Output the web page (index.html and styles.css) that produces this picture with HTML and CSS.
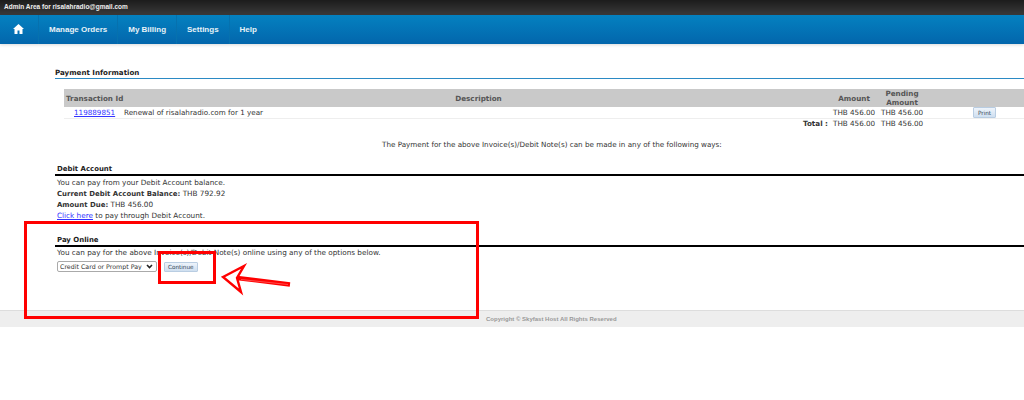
FILE: index.html
```html
<!DOCTYPE html>
<html lang="en">
<head>
<meta charset="utf-8">
<title>Payment Information</title>
<link rel="stylesheet" href="styles.css">
</head>
<body>
<div class="topbar">Admin Area for risalahradio@gmail.com</div>
<nav class="nav">
  <a class="nav-item home"><svg width="11" height="10" viewBox="0 0 11 10"><path d="M5.5 0 L11 5 H9.5 V10 H6.5 V6.5 H4.5 V10 H1.5 V5 H0 Z" fill="#fff"/></svg></a>
  <a class="nav-item">Manage Orders</a>
  <a class="nav-item">My Billing</a>
  <a class="nav-item">Settings</a>
  <a class="nav-item">Help</a>
</nav>
<main class="content">
  <h2 class="info-title">Payment Information</h2>
  <div class="grid">
    <div class="hd first">Transaction Id</div>
    <div class="hd center">Description</div>
    <div class="hd center">Amount</div>
    <div class="hd center">Pending Amount</div>
    <div class="hd"></div>
    <div class="cell id"><a href="#">119889851</a></div>
    <div class="cell">Renewal of risalahradio.com for 1 year</div>
    <div class="cell right">THB 456.00</div>
    <div class="cell pend">THB 456.00</div>
    <div class="cell print"><button class="btn">Print</button></div>
    <div class="tot-label">Total :</div>
    <div class="tot right">THB 456.00</div>
    <div class="tot pend">THB 456.00</div>
    <div class="tot"></div>
  </div>
  <p class="ways">The Payment for the above Invoice(s)/Debit Note(s) can be made in any of the following ways:</p>
  <section class="debit">
    <h3 class="sec-title">Debit Account</h3>
    <p class="line">You can pay from your Debit Account balance.</p>
    <p class="line"><b>Current Debit Account Balance:</b> THB 792.92</p>
    <p class="line"><b>Amount Due:</b> THB 456.00</p>
    <p class="line"><a href="#">Click here</a> to pay through Debit Account.</p>
  </section>
  <section class="online">
    <h3 class="sec-title">Pay Online</h3>
    <p class="line">You can pay for the above Invoice(s)/Debit Note(s) online using any of the options below.</p>
    <div class="pay-row">
      <select class="pay-select"><option>Credit Card or Prompt Pay</option></select>
      <button class="btn">Continue</button>
    </div>
  </section>
</main>
<footer class="footer">Copyright © Skyfast Host All Rights Reserved</footer>
<div class="mark mark-big"></div>
<div class="mark mark-small"></div>
<svg class="arrow" width="74" height="34" viewBox="0 0 74 34">
  <path d="M17 16 L70 22.5" stroke="#f00" stroke-width="4.4" fill="none"/>
  <path d="M3 15 L24 4 L17 16 L21 30 Z" fill="#fff" stroke="#f00" stroke-width="2.4" stroke-linejoin="miter"/>
  <path d="M21 17.5 L68 22.5" stroke="#ff6a6a" stroke-width="0.7" fill="none"/>
</svg>
</body>
</html>
```
FILE: styles.css
```css
html, body { margin: 0; padding: 0; background: #fff; }
body { position: relative; width: 1024px; height: 400px; overflow: hidden; font-family: "DejaVu Sans", Verdana, sans-serif; font-size: 7.2px; color: #333; }
a { color: #33f; text-decoration: underline; }
b { font-size: 6.95px; }

.topbar { height: 15px; padding-left: 4px; font: bold 6.5px/13px "Liberation Sans", Arial, sans-serif; color: #eee; background: linear-gradient(#1c1c1c, #3a3a3a); }

.nav { display: flex; height: 29px; background: linear-gradient(#0481c0, #0366ac); box-shadow: 0 1px 3px rgba(0,0,0,.15); }
.nav-item { display: flex; align-items: center; padding: 0 10px; border-right: 1px solid #0671ae; color: #e8f2f8; font: bold 8px "Liberation Sans", Arial, sans-serif; text-decoration: none; }
.nav-item:last-child { border-right: 0; }
.home { padding: 0 14px 2px 13px; }

.content { padding: 24px 0 0 55px; width: 1024px; height: 266px; box-sizing: border-box; }
.info-title { margin: 0; height: 10px; line-height: 10px; font-size: 7.1px; font-weight: bold; border-bottom: 1px solid #2b8ac4; box-sizing: content-box; color: #222; }

.grid { display: grid; grid-template-columns: 60px 709px 42px 54px 1fr; margin: 10px 0 0 9px; }
.hd { display: flex; align-items: center; height: 18px; background: #c9c9c9; font-weight: bold; color: #555; line-height: 9px; }
.hd.first { position: relative; z-index: 1; padding-left: 2px; white-space: nowrap; }
.hd.center { justify-content: center; text-align: center; }
.cell { height: 11px; line-height: 12px; border-bottom: 1px solid #eee; white-space: nowrap; }
.id { padding-left: 10px; }
.right { text-align: right; }
.pend { padding-left: 6px; }
.print { padding-left: 44px; }
.tot-label { grid-column: 1 / 3; padding-right: 5px; text-align: right; font-weight: bold; line-height: 10px; white-space: nowrap; color: #333; }
.tot { line-height: 10px; white-space: nowrap; }

.btn { display: block; margin: 0; padding: 0 3px; height: 10px; font: 5.7px/8px "DejaVu Sans", Verdana, sans-serif; color: #345; background: linear-gradient(#eef4fb, #cfdff0); border: 1px solid #b9cde2; border-radius: 1px; }
.print .btn { height: 11px; padding: 0 4px; }

.ways { margin: 10px 0 0 327px; line-height: 11px; white-space: nowrap; }

.sec-title { margin: 0; font-size: 6.95px; font-weight: bold; color: #222; line-height: 10px; height: 10px; border-bottom: 2px solid #000; box-sizing: content-box; padding-left: 2px; }
.debit { margin-top: 14px; }
.line { margin: 0; padding-left: 2px; height: 11px; line-height: 11px; font-size: 7.27px; white-space: nowrap; }
.debit .sec-title + .line { margin-top: 1px; }
.online { margin-top: 14px; }
.pay-row { display: flex; gap: 7px; align-items: center; margin: 3px 0 0 2px; }
.pay-select { appearance: none; width: 100px; height: 11px; padding: 0 0 0 2px; font: 6.3px "DejaVu Sans", Verdana, sans-serif; color: #333; background: #fff url("data:image/svg+xml,%3Csvg xmlns='http://www.w3.org/2000/svg' width='7' height='5'%3E%3Cpath d='M1 1 L3.5 3.5 L6 1' fill='none' stroke='%23222' stroke-width='1.6'/%3E%3C/svg%3E") no-repeat right 3px center; border: 1px solid #aaa; border-radius: 2px; }

.footer { height: 17px; padding-left: 486px; font: bold 6px/17px "Liberation Sans", Arial, sans-serif; color: #999; background: #eee; border-top: 1px solid #ddd; box-sizing: border-box; }

.mark { position: absolute; border: 3px solid #f00; box-sizing: border-box; pointer-events: none; }
.mark-big { left: 24px; top: 221px; width: 455px; height: 98px; }
.mark-small { left: 158px; top: 251px; width: 58px; height: 33px; }
.arrow { position: absolute; left: 220px; top: 262px; }
```
